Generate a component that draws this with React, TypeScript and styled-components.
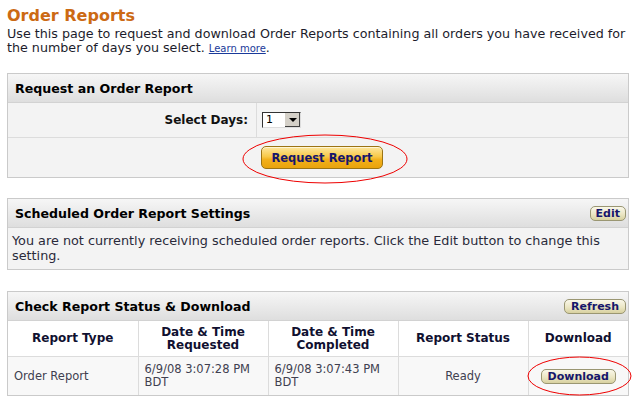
import React from 'react'
import styled, { createGlobalStyle } from 'styled-components'

const GlobalStyle = createGlobalStyle`
    body {
        margin: 0;
        background: #fff;
        font-family: "DejaVu Sans", Verdana, sans-serif;
        color: #1a1a2e;
    }
`

const Page = styled.div`
    padding: 5px 14px 0 7px;
    width: 622px;
`

const Title = styled.h1`
    margin: 0;
    font-size: 16px;
    line-height: 22px;
    color: #cc6a14;
    font-weight: bold;
`

const Intro = styled.p`
    margin: 0;
    font-size: 12.7px;
    line-height: 14px;
    color: #1c1c2c;
`

const Learn = styled.a`
    font-size: 10px;
    color: #1a3a9a;
    text-decoration: underline;
`

const Panel = styled.section<{ $top: number }>`
    margin-top: ${(p) => p.$top}px;
    border: 1px solid #cacaca;
    background: #f3f3f3;
`

const PanelHead = styled.div`
    height: 28px;
    display: flex;
    align-items: center;
    justify-content: space-between;
    padding: 0 2px 0 7px;
    background: linear-gradient(#f6f6f6, #e9e9e9 55%, #dedede);
    border-bottom: 1px solid #d2d2d2;
    font-size: 12.6px;
    font-weight: bold;
    color: #000;
`

const FormRow = styled.div<{ $h: number; $first?: boolean }>`
    display: grid;
    grid-template-columns: 249px 1fr;
    min-height: ${(p) => p.$h}px;
    border-top: ${(p) => (p.$first ? 'none' : '1px solid #dcdcdc')};
`

const Label = styled.div`
    display: flex;
    align-items: center;
    justify-content: flex-end;
    padding-right: 8px;
    border-right: 1px solid #dcdcdc;
    font-size: 12px;
    font-weight: bold;
    color: #111;
`

const Field = styled.div<{ $pad: number }>`
    display: flex;
    align-items: center;
    padding-left: ${(p) => p.$pad}px;
`

const Select = styled.div`
    display: flex;
    width: 39px;
    height: 16px;
    border: 1px solid #333;
    border-right-color: #ddd;
    border-bottom-color: #ddd;
    background: #fff;
    box-sizing: border-box;
    font-size: 11px;
    color: #000;
`

const SelectValue = styled.span`
    flex: 1;
    padding-left: 3px;
    line-height: 14px;
`

const SelectArrow = styled.span`
    width: 15px;
    background: #d4d0c8;
    border-left: 1px solid #fff;
    box-shadow: inset -1px -1px 0 #404040;
    display: flex;
    align-items: center;
    justify-content: center;
    &::after {
        content: '';
        border-left: 4px solid transparent;
        border-right: 4px solid transparent;
        border-top: 4px solid #000;
    }
`

const Circled = styled.span`
    position: relative;
    display: inline-flex;
`

const Ring = styled.svg`
    position: absolute;
    left: 50%;
    top: 50%;
    overflow: visible;
    pointer-events: none;
    z-index: 2;
`

const GoldButton = styled.button`
    height: 23px;
    width: 122px;
    padding: 0;
    border: 1px solid #9c7414;
    border-radius: 5px;
    background: linear-gradient(#fde7a0, #f8c94a 45%, #f2b01c 60%, #e9a30c);
    box-shadow: inset 0 1px 0 #fff6d4;
    font-family: inherit;
    font-size: 11.5px;
    font-weight: bold;
    color: #16166b;
`

const SmallButton = styled.button<{ $px?: number }>`
    height: 15px;
    padding: 0 ${(p) => p.$px ?? 6}px;
    border: 1px solid #9a9672;
    border-radius: 5px;
    background: linear-gradient(#faf8ea, #ebe6c4 55%, #d8d1a0);
    font-family: inherit;
    font-size: 11px;
    font-weight: bold;
    color: #16166b;
    line-height: 1;
`

const Note = styled.p`
    margin: 0;
    padding: 5px 8px 6px 4px;
    font-family: "DejaVu Sans", Tahoma, sans-serif;
    font-size: 12.8px;
    line-height: 15px;
    color: #2a2a3a;
`

const Table = styled.table`
    width: 100%;
    border-collapse: collapse;
    table-layout: fixed;
`

const Th = styled.th`
    height: 35px;
    padding: 0 4px;
    background: #fff;
    border-left: 1px solid #dcdcdc;
    font-size: 12px;
    line-height: 13px;
    font-weight: bold;
    color: #101030;
    text-align: center;
    &:first-child { border-left: none; }
`

const Td = styled.td<{ $align?: string }>`
    height: 38px;
    padding: 0 6px;
    background: #f8f8f8;
    border-left: 1px solid #dcdcdc;
    border-top: 1px solid #dcdcdc;
    font-size: 11.5px;
    line-height: 13px;
    color: #404050;
    text-align: ${(p) => p.$align ?? 'left'};
    &:first-child { border-left: none; }
`

const Ellipse = ({ w, h, dx = 0, dy = 0 }: { w: number; h: number; dx?: number; dy?: number }) => (
    <Ring width={w} height={h} style={{ marginLeft: -w / 2 + dx, marginTop: -h / 2 + dy }}>
        <ellipse cx={w / 2} cy={h / 2} rx={w / 2 - 1} ry={h / 2 - 1} fill="none" stroke="#e00" strokeWidth="1" />
    </Ring>
)

const App = () => {
    return (
        <>
            <GlobalStyle />
            <Page>
                <Title>Order Reports</Title>
                <Intro>
                    Use this page to request and download Order Reports containing all orders you have received for
                    the number of days you select. <Learn href="#">Learn more</Learn>.
                </Intro>

                <Panel $top={17}>
                    <PanelHead>Request an Order Report</PanelHead>
                    <FormRow $h={34} $first>
                        <Label>Select Days:</Label>
                        <Field $pad={5}>
                            <Select>
                                <SelectValue>1</SelectValue>
                                <SelectArrow />
                            </Select>
                        </Field>
                    </FormRow>
                    <FormRow $h={39}>
                        <div />
                        <Field $pad={4}>
                            <Circled>
                                <GoldButton>Request Report</GoldButton>
                                <Ellipse w={166} h={50} dx={3} dy={1} />
                            </Circled>
                        </Field>
                    </FormRow>
                </Panel>

                <Panel $top={20}>
                    <PanelHead>
                        Scheduled Order Report Settings
                        <SmallButton $px={5}>Edit</SmallButton>
                    </PanelHead>
                    <Note>
                        You are not currently receiving scheduled order reports. Click the Edit button to change this
                        setting.
                    </Note>
                </Panel>

                <Panel $top={21}>
                    <PanelHead>
                        Check Report Status &amp; Download
                        <SmallButton>Refresh</SmallButton>
                    </PanelHead>
                    <Table>
                        <colgroup>
                            <col style={{ width: 130 }} />
                            <col style={{ width: 130 }} />
                            <col style={{ width: 130 }} />
                            <col style={{ width: 130 }} />
                            <col />
                        </colgroup>
                        <thead>
                            <tr>
                                <Th>Report Type</Th>
                                <Th>Date &amp; Time Requested</Th>
                                <Th>Date &amp; Time Completed</Th>
                                <Th>Report Status</Th>
                                <Th>Download</Th>
                            </tr>
                        </thead>
                        <tbody>
                            <tr>
                                <Td>Order Report</Td>
                                <Td>6/9/08 3:07:28 PM BDT</Td>
                                <Td>6/9/08 3:07:43 PM BDT</Td>
                                <Td $align="center">Ready</Td>
                                <Td $align="center">
                                    <Circled>
                                        <SmallButton $px={6}>Download</SmallButton>
                                        <Ellipse w={105} h={40} dx={1} dy={0} />
                                    </Circled>
                                </Td>
                            </tr>
                        </tbody>
                    </Table>
                </Panel>
            </Page>
        </>
    )
}

export default App
